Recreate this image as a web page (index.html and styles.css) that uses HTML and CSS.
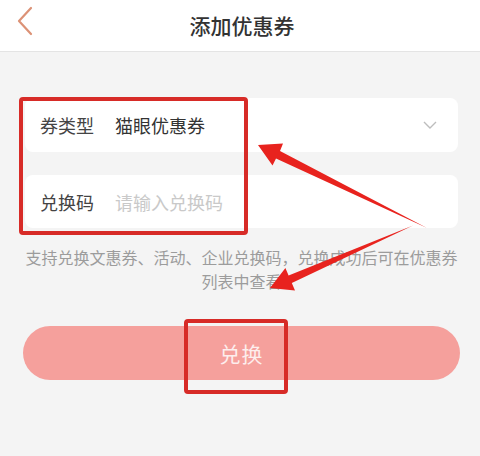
FILE: index.html
```html
<!DOCTYPE html>
<html lang="zh-CN">
<head>
<meta charset="utf-8">
<title>添加优惠券</title>
<link rel="stylesheet" href="styles.css">
</head>
<body>
<div class="page">
  <header class="header">
    <svg class="back" width="18" height="30" viewBox="0 0 18 30"><polyline points="15,2 3,15 15,28" fill="none" stroke="#dc9276" stroke-width="2.2" stroke-linecap="round" stroke-linejoin="round"/></svg>
    <h1 class="title">添加优惠券</h1>
  </header>
  <main class="content">
    <div class="card card-type">
      <span class="label">券类型</span>
      <span class="value">猫眼优惠券</span>
      <svg class="chev" width="14" height="8" viewBox="0 0 14 8"><polyline points="1,1 7,7 13,1" fill="none" stroke="#bdbdbd" stroke-width="1.4"/></svg>
    </div>
    <div class="card card-code">
      <span class="label">兑换码</span>
      <span class="placeholder">请输入兑换码</span>
    </div>
    <p class="hint">支持兑换文惠券、活动、企业兑换码，兑换成功后可在优惠券列表中查看</p>
    <button class="btn">兑换</button>
  </main>
  <div class="mark mark-fields"></div>
  <div class="mark mark-btn"></div>
  <svg class="arrows" width="480" height="456" viewBox="0 0 480 456">
    <polygon points="258,145 283,143.5 280,151 427,228 276,158.5 272.5,165.5" fill="#e8231e"/>
    <polygon points="270,288 285.4,268 288.6,275.5 413,225.5 291.8,283 295,290.5" fill="#e8231e"/>
  </svg>
</div>
</body>
</html>
```

FILE: styles.css
```css
html, body {
  margin: 0;
  padding: 0;
}
body {
  background: #f4f4f4;
  font-family: "Noto Sans CJK SC", "Noto Sans", sans-serif;
}
.page {
  position: relative;
  width: 480px;
  height: 456px;
  overflow: hidden;
  background: #f4f4f4;
}
.header {
  height: 51px;
  background: #fff;
  border-bottom: 1px solid #e4e4e4;
  display: flex;
  align-items: center;
  justify-content: center;
  position: relative;
}
.back {
  position: absolute;
  left: 16px;
  top: 6px;
}
.title {
  margin: 0;
  font-size: 21px;
  font-weight: 500;
  color: #333;
  line-height: 1;
  margin-left: 4px;
}
.content {
  padding: 46px 22px 0 25px;
  display: flex;
  flex-direction: column;
}
.card {
  background: #fff;
  border-radius: 8px;
  display: flex;
  align-items: center;
  padding: 0 15px;
  font-size: 18px;
  line-height: 1;
}
.card-type {
  height: 54px;
}
.card-code {
  height: 53px;
  margin-top: 23px;
}
.label {
  width: 75px;
  color: #444;
  flex: none;
}
.value {
  flex: 1;
  color: #333;
}
.placeholder {
  flex: 1;
  color: #c9c9c9;
}
.chev {
  margin-right: 6px;
}
.hint {
  margin: 17px -2px 0 -2px;
  font-size: 16px;
  line-height: 24px;
  color: #9c9c9c;
  text-align: center;
}
.btn {
  margin: 33px 0 0 -2px;
  width: 437px;
  height: 54px;
  border: none;
  border-radius: 27px;
  background: #f5a09c;
  color: #fdeeed;
  font-family: inherit;
  font-size: 21px;
  letter-spacing: 1px;
  padding: 0;
}
.mark {
  position: absolute;
  border: 4px solid #d72b27;
  border-radius: 4px;
  box-sizing: border-box;
}
.mark-fields {
  left: 19px;
  top: 97px;
  width: 229px;
  height: 138px;
}
.mark-btn {
  left: 184px;
  top: 319px;
  width: 104px;
  height: 75px;
}
.arrows {
  position: absolute;
  left: 0;
  top: 0;
}
```
